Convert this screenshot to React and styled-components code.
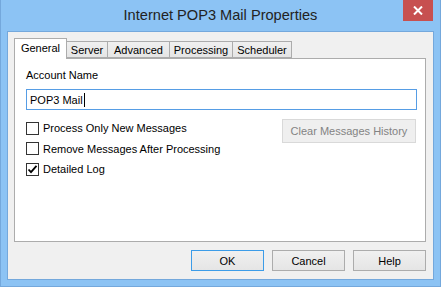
import React from 'react';
import styled, { createGlobalStyle } from 'styled-components';

const GlobalStyle = createGlobalStyle`
  html, body {
    margin: 0;
    padding: 0;
    background: #ffffff;
  }
  * {
    box-sizing: border-box;
  }
`;

const tabs = [
  { label: 'General', width: 53 },
  { label: 'Server', width: 42 },
  { label: 'Advanced', width: 63 },
  { label: 'Processing', width: 64 },
  { label: 'Scheduler', width: 60 },
];

const options = [
  { label: 'Process Only New Messages', checked: false },
  { label: 'Remove Messages After Processing', checked: false },
  { label: 'Detailed Log', checked: true },
];

const App = () => {
  return (
    <>
      <GlobalStyle />
      <Window>
        <TitleBar>
          <Title>Internet POP3 Mail Properties</Title>
          <CloseButton>
            <svg width="10" height="9" viewBox="0 0 10 9">
              <path d="M1 0.5 L9 8.5 M9 0.5 L1 8.5" stroke="#ffffff" strokeWidth="2" />
            </svg>
          </CloseButton>
        </TitleBar>
        <Client>
          <TabStrip>
            {tabs.map((tab, i) => (
              <Tab key={tab.label} $width={tab.width} $active={i === 0}>
                {tab.label}
              </Tab>
            ))}
          </TabStrip>
          <Panel>
            <FieldLabel>Account Name</FieldLabel>
            <TextField>
              POP3 Mail<Caret />
            </TextField>
            <OptionsRow>
              <CheckList>
                {options.map(option => (
                  <CheckRow key={option.label}>
                    <CheckBox>
                      {option.checked && (
                        <svg width="11" height="11" viewBox="0 0 11 11">
                          <path d="M1.5 5.5 L4 8.2 L9.5 1.8" fill="none" stroke="#000" strokeWidth="1.8" />
                        </svg>
                      )}
                    </CheckBox>
                    {option.label}
                  </CheckRow>
                ))}
              </CheckList>
              <DisabledButton>Clear Messages History</DisabledButton>
            </OptionsRow>
          </Panel>
          <ButtonRow>
            <DialogButton $default>OK</DialogButton>
            <DialogButton>Cancel</DialogButton>
            <DialogButton>Help</DialogButton>
          </ButtonRow>
        </Client>
      </Window>
    </>
  );
};

const Window = styled.div`
  width: 441px;
  height: 287px;
  background: #8cc3f4;
  border: 1px solid #74a8dc;
  border-top: none;
  padding: 0 6px 6px 6px;
  display: flex;
  flex-direction: column;
  font-family: 'Liberation Sans', Arial, sans-serif;
  font-size: 11px;
  color: #000;
`;

const TitleBar = styled.div`
  position: relative;
  height: 31px;
  display: flex;
  align-items: center;
  justify-content: center;
`;

const Title = styled.div`
  font-family: 'Liberation Sans', Arial, sans-serif;
  font-size: 14.6px;
  color: #222;
  margin-top: -1px;
`;

const CloseButton = styled.div`
  position: absolute;
  top: 0;
  right: 1px;
  width: 30px;
  height: 21px;
  background: #c75050;
  display: flex;
  align-items: center;
  justify-content: center;
`;

const Client = styled.div`
  flex: 1;
  background: #f0f0f0;
  border: 1px solid #74a8dc;
  padding: 6px 7px 8px 6px;
  display: flex;
  flex-direction: column;
`;

const TabStrip = styled.div`
  display: flex;
  align-items: flex-end;
  height: 20px;
`;

const Tab = styled.div`
  position: relative;
  width: ${p => p.$width}px;
  height: ${p => (p.$active ? 21 : 17)}px;
  margin-bottom: ${p => (p.$active ? -1 : 0)}px;
  margin-left: ${p => (p.$active ? 0 : -1)}px;
  z-index: ${p => (p.$active ? 2 : 1)};
  border: 1px solid #acacac;
  border-bottom: ${p => (p.$active ? 'none' : '1px solid #acacac')};
  background: ${p => (p.$active ? '#ffffff' : 'linear-gradient(#f0f0f0, #e5e5e5)')};
  display: flex;
  align-items: center;
  justify-content: center;
  padding-bottom: ${p => (p.$active ? 2 : 0)}px;
  &:first-child {
    margin-left: 0;
  }
`;

const Panel = styled.div`
  flex: 1;
  background: #ffffff;
  border: 1px solid #acacac;
  padding: 10px 8px 0 11px;
  display: flex;
  flex-direction: column;
`;

const FieldLabel = styled.div`
  height: 13px;
  line-height: 13px;
`;

const TextField = styled.div`
  margin-top: 7px;
  height: 21px;
  border: 1px solid #569de5;
  background: #fff;
  padding: 0 3px;
  display: flex;
  align-items: center;
`;

const Caret = styled.span`
  display: inline-block;
  width: 1px;
  height: 14px;
  background: #000;
  margin-left: 1px;
`;

const OptionsRow = styled.div`
  margin-top: 9px;
  display: flex;
  justify-content: space-between;
  align-items: flex-start;
`;

const CheckList = styled.div`
  display: flex;
  flex-direction: column;
  gap: 6.5px;
  padding-top: 2px;
`;

const CheckRow = styled.div`
  display: flex;
  align-items: center;
  gap: 4px;
  height: 14px;
`;

const CheckBox = styled.div`
  width: 13px;
  height: 13px;
  border: 1px solid #333333;
  background: #fff;
  display: flex;
  align-items: center;
  justify-content: center;
`;

const DisabledButton = styled.div`
  width: 134px;
  height: 24px;
  margin-right: 1px;
  border: 1px solid #d9d9d9;
  background: #efefef;
  color: #838383;
  display: flex;
  align-items: center;
  justify-content: center;
`;

const ButtonRow = styled.div`
  margin-top: 8px;
  display: flex;
  justify-content: flex-end;
  gap: 8px;
`;

const DialogButton = styled.div`
  width: 73px;
  height: 21px;
  border: 1px solid ${p => (p.$default ? '#3c9ce8' : '#acacac')};
  background: linear-gradient(#f0f0f0, #e5e5e5);
  display: flex;
  align-items: center;
  justify-content: center;
`;

export default App;
